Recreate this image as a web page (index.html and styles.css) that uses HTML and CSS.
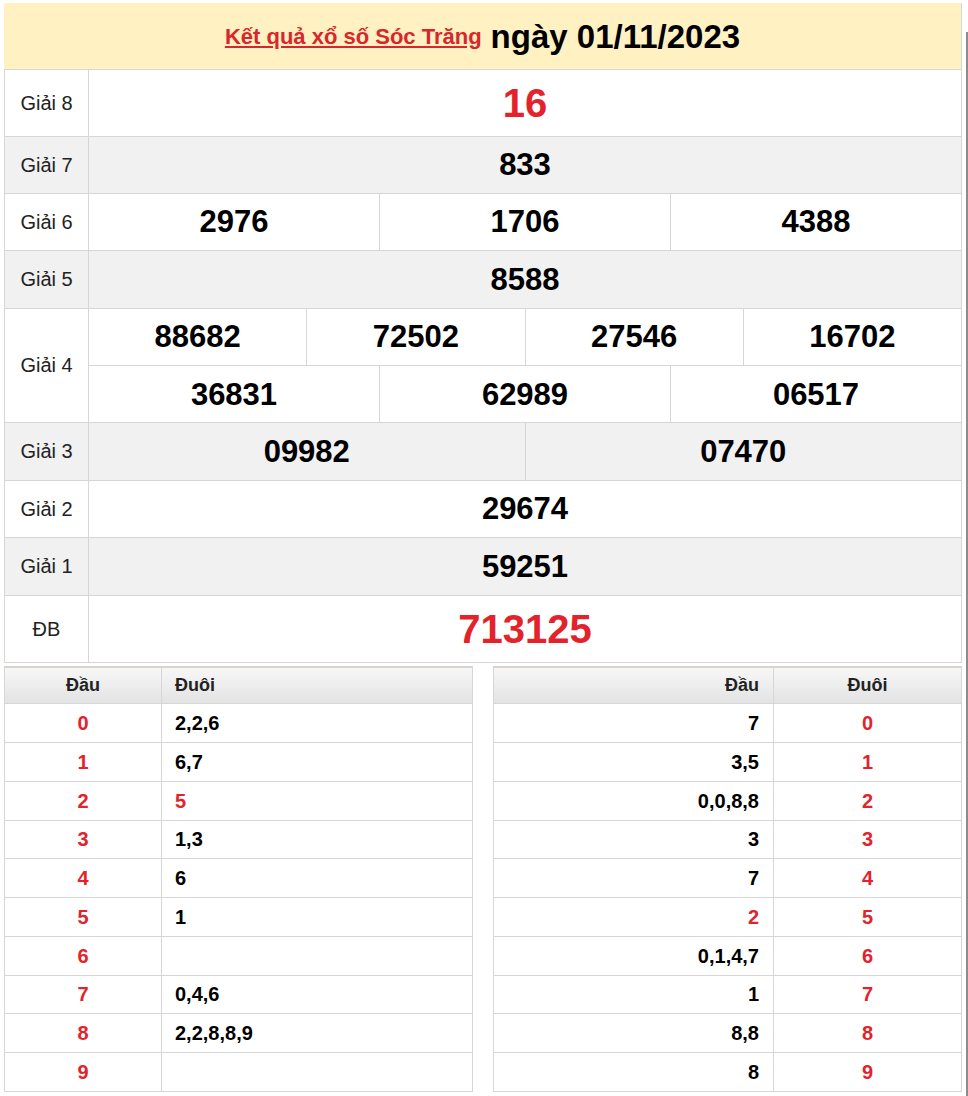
FILE: index.html
```html
<!DOCTYPE html>
<html lang="vi">
<head>
<meta charset="utf-8">
<title>Kết quả xổ số Sóc Trăng ngày 01/11/2023</title>
<link rel="stylesheet" href="styles.css">
</head>
<body>
<div class="page">
  <div class="kq">
    <div class="kq-title">
      <a class="kq-link" href="#">Kết quả xổ số Sóc Trăng</a>
      <span class="kq-date">ngày 01/11/2023</span>
    </div>
    <div class="row row-tall">
      <div class="lbl">Giải 8</div>
      <div class="vals"><div class="v v-red">16</div></div>
    </div>
    <div class="row row-alt">
      <div class="lbl">Giải 7</div>
      <div class="vals"><div class="v">833</div></div>
    </div>
    <div class="row">
      <div class="lbl">Giải 6</div>
      <div class="vals"><div class="v">2976</div><div class="v">1706</div><div class="v">4388</div></div>
    </div>
    <div class="row row-alt row-plus">
      <div class="lbl">Giải 5</div>
      <div class="vals"><div class="v">8588</div></div>
    </div>
    <div class="row row-double">
      <div class="lbl">Giải 4</div>
      <div class="vals-stack">
        <div class="vals vals-sub"><div class="v">88682</div><div class="v">72502</div><div class="v">27546</div><div class="v">16702</div></div>
        <div class="vals"><div class="v">36831</div><div class="v">62989</div><div class="v">06517</div></div>
      </div>
    </div>
    <div class="row row-alt row-plus">
      <div class="lbl">Giải 3</div>
      <div class="vals"><div class="v">09982</div><div class="v">07470</div></div>
    </div>
    <div class="row">
      <div class="lbl">Giải 2</div>
      <div class="vals"><div class="v">29674</div></div>
    </div>
    <div class="row row-alt row-plus">
      <div class="lbl">Giải 1</div>
      <div class="vals"><div class="v">59251</div></div>
    </div>
    <div class="row row-tall">
      <div class="lbl">ĐB</div>
      <div class="vals"><div class="v v-red">713125</div></div>
    </div>
  </div>

  <div class="loto-wrap">
    <div class="loto loto-left">
      <div class="lr lr-head"><div class="c c-dau">Đầu</div><div class="c c-duoi">Đuôi</div></div>
      <div class="lr"><div class="c c-dau red">0</div><div class="c c-duoi">2,2,6</div></div>
      <div class="lr"><div class="c c-dau red">1</div><div class="c c-duoi">6,7</div></div>
      <div class="lr"><div class="c c-dau red">2</div><div class="c c-duoi red">5</div></div>
      <div class="lr lr-s"><div class="c c-dau red">3</div><div class="c c-duoi">1,3</div></div>
      <div class="lr"><div class="c c-dau red">4</div><div class="c c-duoi">6</div></div>
      <div class="lr"><div class="c c-dau red">5</div><div class="c c-duoi">1</div></div>
      <div class="lr"><div class="c c-dau red">6</div><div class="c c-duoi"></div></div>
      <div class="lr lr-s"><div class="c c-dau red">7</div><div class="c c-duoi">0,4,6</div></div>
      <div class="lr"><div class="c c-dau red">8</div><div class="c c-duoi">2,2,8,8,9</div></div>
      <div class="lr"><div class="c c-dau red">9</div><div class="c c-duoi"></div></div>
    </div>
    <div class="loto loto-right">
      <div class="lr lr-head"><div class="c c-dau">Đầu</div><div class="c c-duoi">Đuôi</div></div>
      <div class="lr"><div class="c c-dau">7</div><div class="c c-duoi red">0</div></div>
      <div class="lr"><div class="c c-dau">3,5</div><div class="c c-duoi red">1</div></div>
      <div class="lr"><div class="c c-dau">0,0,8,8</div><div class="c c-duoi red">2</div></div>
      <div class="lr lr-s"><div class="c c-dau">3</div><div class="c c-duoi red">3</div></div>
      <div class="lr"><div class="c c-dau">7</div><div class="c c-duoi red">4</div></div>
      <div class="lr"><div class="c c-dau red">2</div><div class="c c-duoi red">5</div></div>
      <div class="lr"><div class="c c-dau">0,1,4,7</div><div class="c c-duoi red">6</div></div>
      <div class="lr lr-s"><div class="c c-dau">1</div><div class="c c-duoi red">7</div></div>
      <div class="lr"><div class="c c-dau">8,8</div><div class="c c-duoi red">8</div></div>
      <div class="lr"><div class="c c-dau">8</div><div class="c c-duoi red">9</div></div>
    </div>
  </div>
</div>
<div class="scrollbar"></div>
</body>
</html>
```

FILE: styles.css
```css
html, body {
  margin: 0;
  padding: 0;
  background: #fff;
}
body {
  font-family: "Liberation Sans", Arial, sans-serif;
  color: #222;
}
.page {
  padding: 3px 0 0 4px;
  width: 958px;
}

/* main result table */
.kq {
  width: 958px;
  box-sizing: border-box;
  border-left: 1px solid #d6d6d6;
  border-right: 1px solid #d6d6d6;
}
.kq-title {
  height: 67px;
  box-sizing: border-box;
  background: #fff1c2;
  border-bottom: 1px solid #d6d6d6;
  display: flex;
  align-items: center;
  justify-content: center;
  gap: 9px;
  margin-left: -1px;
  padding-top: 1px;
}
.kq-link {
  color: #d9262c;
  font-weight: bold;
  font-size: 22px;
  text-decoration: underline;
  text-underline-offset: 2px;
}
.kq-date {
  color: #000;
  font-weight: bold;
  font-size: 33px;
}
.row {
  display: flex;
  height: 57px;
  box-sizing: border-box;
  border-bottom: 1px solid #d6d6d6;
  background: #fff;
}
.row-plus {
  height: 58px;
}
.row-alt {
  background: #f1f1f1;
}
.row-tall {
  height: 67px;
}
.row-double {
  height: 114px;
}
.lbl {
  width: 84px;
  flex: none;
  box-sizing: border-box;
  border-right: 1px solid #d6d6d6;
  display: flex;
  align-items: center;
  justify-content: center;
  font-size: 20px;
  color: #222;
}
.vals {
  flex: 1;
  display: flex;
  min-width: 0;
}
.vals-stack {
  flex: 1;
  display: flex;
  flex-direction: column;
}
.vals-stack .vals {
  height: 57px;
  flex: none;
  box-sizing: border-box;
}
.vals-sub {
  border-bottom: 1px solid #d6d6d6;
}
.v {
  flex: 1 1 0;
  display: flex;
  align-items: center;
  justify-content: center;
  font-size: 31px;
  font-weight: bold;
  color: #000;
  border-left: 1px solid #d6d6d6;
}
.v:first-child {
  border-left: none;
}
.v-red {
  color: #e3232b;
  font-size: 40px;
}

/* loto tables */
.loto-wrap {
  display: flex;
  justify-content: space-between;
  margin-top: 3px;
  width: 958px;
}
.loto {
  box-sizing: border-box;
  border-left: 1px solid #d6d6d6;
  border-right: 1px solid #d6d6d6;
}
.loto-left {
  width: 469px;
}
.loto-right {
  width: 469px;
}
.lr {
  display: flex;
  height: 39px;
  box-sizing: border-box;
  border-bottom: 1px solid #d6d6d6;
  font-size: 20px;
  font-weight: bold;
  color: #000;
}
.lr-s {
  height: 38px;
}
.lr-head {
  height: 38px;
  border-top: 2px solid #d8d4cd;
  background: linear-gradient(#f7f7f7, #e3e3e3);
  color: #222;
  font-size: 18px;
}
.c {
  display: flex;
  align-items: center;
  box-sizing: border-box;
}
.c + .c {
  border-left: 1px solid #d6d6d6;
}
.loto-left .c-dau {
  width: 156px;
  justify-content: center;
}
.loto-left .c-duoi {
  flex: 1;
  padding-left: 13px;
}
.loto-right .c-dau {
  width: 279px;
  justify-content: flex-end;
  padding-right: 14px;
}
.loto-right .c-duoi {
  flex: 1;
  justify-content: center;
}
.red {
  color: #e3232b;
}

.scrollbar {
  position: fixed;
  top: 32px;
  right: 0;
  bottom: 0;
  width: 2px;
  background: #8c8c8c;
}
```
